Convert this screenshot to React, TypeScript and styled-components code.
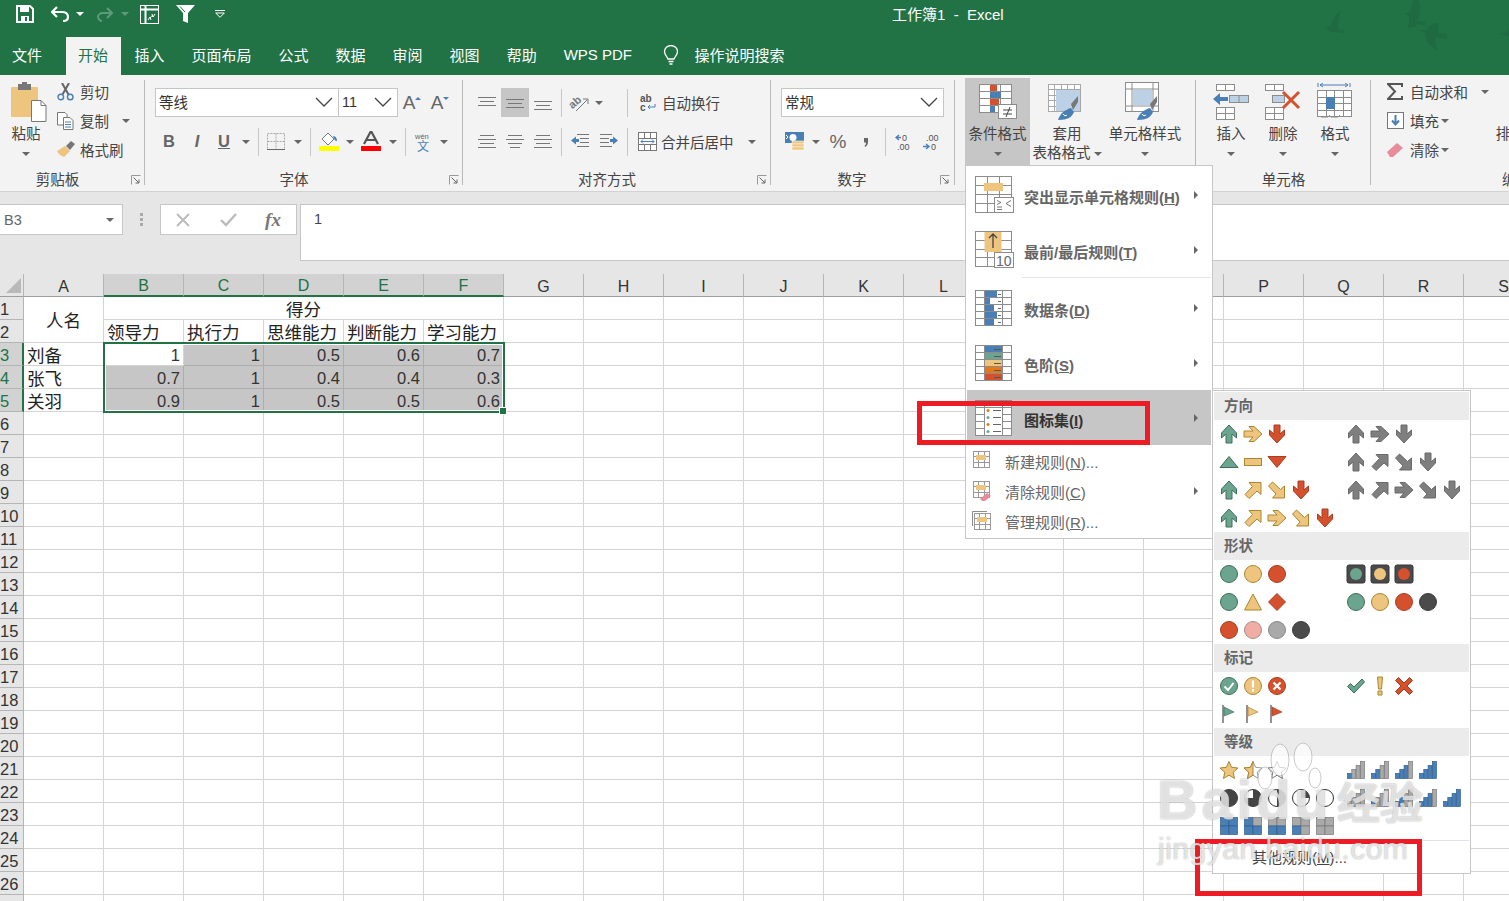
import type { ReactNode } from "react";
import styled, { createGlobalStyle } from "styled-components";

const FONT = `"Liberation Sans", "Noto Sans CJK SC", sans-serif`;
const GREEN = "#217346";
const BLUE = "#4a7fb5";
const ORANGE = "#eec57f";
const RED = "#d5502d";
const LINE = "#8c8c8c";

const GlobalStyle = createGlobalStyle`
  html, body { margin: 0; padding: 0; background: #fff; overflow: hidden; }
  * { box-sizing: border-box; }
`;

const Page = styled.div`
  position: relative;
  width: 1509px;
  height: 901px;
  overflow: hidden;
  font-family: ${FONT};
  color: #444;
`;

const TitleBar = styled.header`
  position: relative;
  height: 75px;
  background: ${GREEN};
  color: #fff;
`;

const QuickRow = styled.div`
  display: flex;
  align-items: center;
  height: 37px;
  padding-bottom: 9px;
`;

const QuickSlot = styled.div<{ $w: number }>`
  display: flex;
  justify-content: center;
  align-items: center;
  flex: 0 0 ${(p) => p.$w}px;
`;

const WindowTitle = styled.div`
  margin-left: 654px;
  padding-bottom: 2px;
  font-size: 15px;
  white-space: nowrap;
`;

const TabRow = styled.nav`
  display: flex;
  align-items: stretch;
  height: 38px;
  font-size: 15px;
`;

const Tab = styled.div<{ $active?: boolean; $first?: boolean }>`
  display: flex;
  align-items: center;
  padding: 0 ${(p) => (p.$active ? 13 : p.$first ? 24 : 13.5)}px 3px ${(p) => (p.$active || p.$first ? 12 : 13.5)}px;
  background: ${(p) => (p.$active ? "#f3f3f3" : "transparent")};
  color: ${(p) => (p.$active ? GREEN : "#fff")};
  white-space: nowrap;
`;

const SearchTab = styled(Tab)`
  margin-left: 18px;
  padding: 0 0 3px;
  gap: 15px;
`;

const Birds = styled.svg`
  position: absolute;
  top: 0;
  right: 0;
`;

const Ribbon = styled.section`
  display: flex;
  height: 117px;
  background: #f3f3f3;
  border-bottom: 1px solid #d2d2d2;
`;

const Group = styled.div<{ $w?: number; $pl?: number; $noLine?: boolean }>`
  position: relative;
  flex: ${(p) => (p.$w ? `0 0 ${p.$w}px` : "1 1 0")};
  min-width: 0;
  overflow: hidden;
  padding-left: ${(p) => p.$pl ?? 0}px;
  display: flex;
  flex-direction: column;
  &::after {
    content: "";
    display: ${(p) => (p.$noLine ? "none" : "block")};
    position: absolute;
    right: 0;
    top: 5px;
    bottom: 6px;
    width: 1px;
    background: #b9b9b9;
  }
`;

const GroupBody = styled.div<{ $column?: boolean }>`
  height: 92px;
  display: flex;
  flex-direction: ${(p) => (p.$column ? "column" : "row")};
  padding-top: ${(p) => (p.$column ? 13 : 3)}px;
`;

const GroupLabel = styled.div<{ $pr?: number; $pl?: number }>`
  height: 24px;
  line-height: 26px;
  margin-left: ${(p) => -(p.$pl ?? 0)}px;
  padding-right: ${(p) => p.$pr ?? 0}px;
  text-align: center;
  font-size: 14.5px;
  color: #444;
  white-space: nowrap;
`;

const EdgeLabel = styled(GroupLabel)`
  text-align: left;
  margin-left: 115px;
`;

const Launcher = styled.svg<{ $right: number }>`
  position: absolute;
  right: ${(p) => p.$right}px;
  bottom: 6px;
`;

const LargeButton = styled.div<{ $w: number; $on?: boolean }>`
  flex: 0 0 ${(p) => p.$w}px;
  width: ${(p) => p.$w}px;
  height: 87px;
  display: flex;
  flex-direction: column;
  align-items: center;
  background: ${(p) => (p.$on ? "#c6c6c6" : "transparent")};
`;

const LargeIcon = styled.div<{ $ml?: number }>`
  height: 47px;
  margin-left: ${(p) => p.$ml ?? 0}px;
  display: flex;
  align-items: center;
  justify-content: center;
`;

const LargeText = styled.div`
  height: 19px;
  line-height: 19px;
  font-size: 14.5px;
  white-space: nowrap;
  display: flex;
  align-items: center;
  gap: 3px;
`;

const CaretLine = styled.div`
  height: 19px;
  display: flex;
  align-items: center;
`;

const Caret = styled.i<{ $ml?: number; $color?: string }>`
  display: inline-block;
  flex: none;
  margin-left: ${(p) => p.$ml ?? 0}px;
  width: 0;
  height: 0;
  border-left: 4px solid transparent;
  border-right: 4px solid transparent;
  border-top: 4px solid ${(p) => p.$color ?? "#666"};
`;

const SmallColumn = styled.div<{ $ml?: number; $w?: number }>`
  flex: none;
  margin-top: -1px;
  margin-left: ${(p) => p.$ml ?? 0}px;
  width: ${(p) => (p.$w ? `${p.$w}px` : "auto")};
  display: flex;
  flex-direction: column;
`;

const SmallRow = styled.div`
  height: 29px;
  display: flex;
  align-items: center;
  font-size: 14.5px;
  white-space: nowrap;
`;

const SmallIcon = styled.span`
  flex: 0 0 23px;
  display: flex;
  align-items: center;
`;

const ToolRow = styled.div<{ $mt?: number }>`
  display: flex;
  align-items: center;
  height: 29px;
  margin-top: ${(p) => p.$mt ?? 0}px;
  font-size: 14.5px;
  white-space: nowrap;
`;

const Tool = styled.div<{ $w: number; $on?: boolean }>`
  flex: 0 0 ${(p) => p.$w}px;
  height: 29px;
  display: flex;
  align-items: center;
  justify-content: center;
  background: ${(p) => (p.$on ? "#c6c6c6" : "transparent")};
`;

const ToolSep = styled.span<{ $ml?: number; $mr?: number }>`
  flex: none;
  width: 1px;
  height: 28px;
  margin: 0 ${(p) => p.$mr ?? 3}px 0 ${(p) => p.$ml ?? 3}px;
  background: #c6c6c6;
`;

const Combo = styled.div<{ $w: number; $ml?: number }>`
  flex: 0 0 ${(p) => p.$w}px;
  height: 29px;
  margin-left: ${(p) => p.$ml ?? 0}px;
  padding: 0 5px 2px 3px;
  display: flex;
  align-items: center;
  justify-content: space-between;
  background: #fff;
  border: 1px solid #c6c6c6;
  font-size: 14.5px;
  color: #333;
`;

const BoldLetter = styled.span<{ $italic?: boolean; $under?: boolean }>`
  font: ${(p) => (p.$italic ? "italic" : "normal")} 700 16.5px "Liberation Sans", sans-serif;
  color: #666;
  text-decoration: ${(p) => (p.$under ? "underline" : "none")};
`;

const SymbolText = styled.span`
  font: 400 19px "Liberation Sans", sans-serif;
  color: #666;
`;

const FormulaBar = styled.section`
  height: 82px;
  padding-top: 12px;
  display: flex;
  align-items: flex-start;
  background: #e6e6e6;
`;

const NameBox = styled.div`
  width: 123px;
  height: 31px;
  padding: 0 8px 0 4px;
  display: flex;
  align-items: center;
  justify-content: space-between;
  background: #fff;
  border: 1px solid #c6c6c6;
  border-left: none;
  font-size: 14.5px;
  color: #666;
`;

const Grip = styled.div`
  width: 37px;
  height: 31px;
  display: flex;
  flex-direction: column;
  align-items: center;
  justify-content: center;
  gap: 2px;
  span {
    width: 3px;
    height: 3px;
    background: #aaa;
  }
`;

const FormulaTools = styled.div`
  width: 137px;
  height: 31px;
  display: flex;
  align-items: center;
  border: 1px solid #c6c6c6;
  background: #fff;
`;

const FormulaTool = styled.div<{ $w: number }>`
  flex: 0 0 ${(p) => p.$w}px;
  display: flex;
  justify-content: center;
  align-items: center;
`;

const FxText = styled.span`
  font: italic 700 19px "Liberation Serif", serif;
  color: #777;
`;

const FormulaInput = styled.div`
  flex: 1;
  margin-left: 3px;
  height: 57px;
  padding: 6px 0 0 13px;
  background: #fff;
  border: 1px solid #c6c6c6;
  border-right: none;
  font-size: 14.5px;
  color: #444;
`;

const Sheet = styled.div`
  display: grid;
  grid-template-columns: 24px repeat(19, 80px);
  grid-template-rows: repeat(28, 23px);
  width: 1544px;
  color: #222;
`;

const CornerCell = styled.div`
  grid-area: 1 / 1;
  background: #e6e6e6;
  border-right: 1px solid #b5b5b5;
  border-bottom: 1px solid #9e9e9e;
  &::after {
    content: "";
    display: block;
    width: 15px;
    height: 15px;
    margin: 4px 0 0 6px;
    background: #b9b9b9;
    clip-path: polygon(100% 0, 100% 100%, 0 100%);
  }
`;

const ColHead = styled.div<{ $col: number; $on: boolean }>`
  grid-area: 1 / ${(p) => p.$col};
  display: flex;
  align-items: flex-end;
  justify-content: center;
  font-size: 16px;
  line-height: 18px;
  background: ${(p) => (p.$on ? "#d2d2d2" : "#e6e6e6")};
  color: ${(p) => (p.$on ? GREEN : "#333")};
  border-right: 1px solid #b5b5b5;
  border-bottom: ${(p) => (p.$on ? `2px solid ${GREEN}` : "1px solid #9e9e9e")};
`;

const RowHead = styled.div<{ $row: number; $on: boolean }>`
  grid-area: ${(p) => p.$row} / 1;
  font-size: 16.5px;
  line-height: 25px;
  overflow: visible;
  white-space: nowrap;
  background: ${(p) => (p.$on ? "#d2d2d2" : "#e6e6e6")};
  color: ${(p) => (p.$on ? GREEN : "#333")};
  border-right: ${(p) => (p.$on ? `2px solid ${GREEN}` : "1px solid #b5b5b5")};
  border-bottom: 1px solid #b5b5b5;
`;

const Cell = styled.div<{
  $row: number;
  $col: number;
  $rows?: number;
  $cols?: number;
  $fill?: boolean;
  $align?: string;
}>`
  grid-row: ${(p) => p.$row} / span ${(p) => p.$rows ?? 1};
  grid-column: ${(p) => p.$col} / span ${(p) => p.$cols ?? 1};
  display: flex;
  align-items: center;
  justify-content: ${(p) => p.$align ?? "flex-start"};
  padding: 0 3px;
  overflow: hidden;
  white-space: nowrap;
  font-size: 17.5px;
  background: ${(p) => (p.$fill ? "#c6c6c6" : "#fff")};
  border-right: 1px solid ${(p) => (p.$fill ? "#adadad" : "#d4d4d4")};
  border-bottom: 1px solid ${(p) => (p.$fill ? "#adadad" : "#d4d4d4")};
`;

const NumberText = styled.span`
  padding-top: 2px;
  font-size: 16.5px;
  color: #333;
`;

const Selection = styled.div`
  grid-row: 4 / span 3;
  grid-column: 3 / span 5;
  position: relative;
  margin: -1px -1px -1px -1px;
  border: 2px solid ${GREEN};
  box-shadow: inset 0 0 0 1px #fff;
  pointer-events: none;
  &::after {
    content: "";
    position: absolute;
    right: -4px;
    bottom: -4px;
    width: 6px;
    height: 6px;
    background: ${GREEN};
    border: 1px solid #fff;
  }
`;

const Menu = styled.div`
  position: absolute;
  left: 965px;
  top: 165px;
  width: 248px;
  height: 374px;
  padding: 1px;
  background: #fff;
  border: 1px solid #c6c6c6;
`;

const MenuBig = styled.div<{ $on?: boolean }>`
  height: 55px;
  display: flex;
  align-items: center;
  padding-left: 8px;
  background: ${(p) => (p.$on ? "#c6c6c6" : "transparent")};
`;

const MenuBigIcon = styled.div`
  flex: 0 0 49px;
  display: flex;
`;

const MenuBigText = styled.div<{ $on?: boolean }>`
  flex: 1;
  padding-top: 4px;
  font-size: 15px;
  font-weight: 700;
  color: ${(p) => (p.$on ? "#333" : "#666")};
  white-space: nowrap;
`;

const MenuRule = styled.div`
  height: 3px;
  margin-left: 55px;
  border-top: 1px solid #e1e3e8;
`;

const MenuSmall = styled.div<{ $mt?: number }>`
  height: 30px;
  margin-top: ${(p) => p.$mt ?? 0}px;
  display: flex;
  align-items: center;
  padding: 0 0 2px 5px;
  font-size: 15px;
  color: #666;
  white-space: nowrap;
`;

const MenuSmallIcon = styled.div`
  flex: 0 0 33px;
  display: flex;
`;

const MenuSmallText = styled.div`
  flex: 1;
`;

const ChevronRight = styled.i`
  flex: none;
  margin-right: 13px;
  width: 0;
  height: 0;
  border-top: 4px solid transparent;
  border-bottom: 4px solid transparent;
  border-left: 4px solid #666;
`;

const SubMenu = styled.div`
  position: absolute;
  left: 1212px;
  top: 390px;
  width: 259px;
  height: 484px;
  padding: 1px;
  background: #fff;
  border: 1px solid #c6c6c6;
`;

const SetHeader = styled.div`
  height: 28px;
  line-height: 29px;
  padding-left: 10px;
  background: #ebebeb;
  font-size: 14.5px;
  font-weight: 700;
  color: #666;
`;

const SetRow = styled.div`
  height: 28px;
  display: flex;
  align-items: center;
  padding-left: 3px;
`;

const SetGroup = styled.div`
  flex: 0 0 127px;
  display: flex;
`;

const SetIconBox = styled.div`
  flex: 0 0 24px;
  display: flex;
  justify-content: center;
`;

const MoreRules = styled.div`
  height: 33px;
  line-height: 33px;
  padding-left: 38px;
  border-top: 1px solid #e1e3e8;
  font-size: 15px;
  color: #444;
`;

const RedFrame = styled.div<{ $x: number; $y: number; $w: number; $h: number }>`
  position: absolute;
  left: ${(p) => p.$x}px;
  top: ${(p) => p.$y}px;
  width: ${(p) => p.$w}px;
  height: ${(p) => p.$h}px;
  border: 5px solid #ed1c24;
`;

const WatermarkBig = styled.div`
  position: absolute;
  left: 1157px;
  top: 767px;
  font: 700 56px "Liberation Sans", sans-serif;
  letter-spacing: 4px;
  color: rgba(255, 255, 255, 0.7);
  text-shadow: 0 0 1.5px rgba(100, 100, 100, 0.65);
  white-space: nowrap;
`;

const WatermarkCn = styled(WatermarkBig)`
  left: 1337px;
  top: 769px;
  letter-spacing: 0;
  font: 700 43px "Noto Sans CJK SC", sans-serif;
`;

const WatermarkUrl = styled(WatermarkBig)`
  left: 1158px;
  top: 832px;
  letter-spacing: 0.5px;
  font: 400 30px "Liberation Sans", sans-serif;
`;

const WatermarkPaw = styled.svg`
  position: absolute;
  left: 1256px;
  top: 742px;
`;

// ---- small drawings ----

const Ico = ({ w, h = w, children }: { w: number; h?: number; children: ReactNode }) => (
  <svg width={w} height={h} viewBox={`0 0 ${w} ${h}`} style={{ display: "block", flex: "none" }}>
    {children}
  </svg>
);

const Table = ({ x = 0, y = 0, w, h, cols, rows, c = LINE }: { x?: number; y?: number; w: number; h: number; cols: number; rows: number; c?: string }) => {
  const parts: ReactNode[] = [];
  for (let i = 1; i < cols; i++) {
    const px = x + Math.round((w * i) / cols) + 0.5;
    parts.push(<path key={`c${i}`} d={`M${px} ${y}V${y + h}`} stroke={c} fill="none" />);
  }
  for (let i = 1; i < rows; i++) {
    const py = y + Math.round((h * i) / rows) + 0.5;
    parts.push(<path key={`r${i}`} d={`M${x} ${py}H${x + w}`} stroke={c} fill="none" />);
  }
  return (
    <g>
      <rect x={x + 0.5} y={y + 0.5} width={w} height={h} fill="#fff" stroke={c} />
      {parts}
    </g>
  );
};

const LauncherIcon = ({ right }: { right: number }) => (
  <Launcher $right={right} width="10" height="10" viewBox="0 0 10 10">
    <path d="M0.5 9.5V0.5H9.5" stroke="#999" fill="none" />
    <path d="M2.5 2.5L8 8M8 4.5V8H4.5" stroke="#666" fill="none" />
  </Launcher>
);

const Chevron = () => (
  <Ico w={18} h={10}>
    <path d="M1 1L9 9L17 1" stroke="#444" fill="none" strokeWidth="1.3" />
  </Ico>
);

const Bird = ({ d, dx }: { d: string; dx: number }) => <path d={d} transform={`translate(${dx} 0)`} fill="#1f6a41" />;

const CondIcon = () => (
  <Ico w={38} h={36}>
    <Table w={32} h={28} cols={3} rows={4} />
    <rect x="11" y="1" width="7" height="6" fill={RED} />
    <rect x="11" y="8" width="11" height="6" fill={BLUE} />
    <rect x="11" y="15" width="9" height="6" fill={RED} />
    <rect x="11" y="22" width="5" height="6" fill={BLUE} />
    <rect x="19.5" y="20.5" width="18" height="14" fill="#fff" stroke={LINE} />
    <path d="M24 26h9M24 30h9M31 23l-4 10" stroke="#444" fill="none" />
  </Ico>
);

const Brush = ({ x, y }: { x: number; y: number }) => (
  <g transform={`translate(${x} ${y})`}>
    <path d="M13 0l7 -8v6l-5 8z" fill="#777" />
    <path d="M0 16c2-6 6-10 13-12l3 4c-2 5-6 8-16 8z" fill={BLUE} />
    <path d="M5 10c1 2 3 2 4 1" stroke="#fff" fill="none" />
  </g>
);

const TableFormatIcon = () => (
  <Ico w={38} h={38}>
    <Table y={1} w={32} h={27} cols={5} rows={5} c="#a8a8a8" />
    <rect x="8" y="7" width="24" height="21" fill="#bcd0e6" />
    <Brush x={10} y={21} />
  </Ico>
);

const CellStyleIcon = () => (
  <Ico w={40} h={40}>
    <Table w={33} h={29} cols={1} rows={1} />
    <path d="M7 0V30M28 0V30M0 7H33M0 24H33" stroke={LINE} />
    <rect x="8" y="8" width="19" height="15" fill="#bcd0e6" />
    <Brush x={12} y={22} />
  </Ico>
);

const InsertIcon = () => (
  <Ico w={37} h={36}>
    <Table x={3} w={18} h={6} cols={2} rows={1} />
    <Table x={3} y={23} w={18} h={12} cols={2} rows={2} />
    <rect x="16.5" y="11.5" width="19" height="7" fill="#bcd0e6" stroke={LINE} />
    <path d="M26 11V18" stroke={LINE} />
    <path d="M0 15L7 9V13H15V17H7V21Z" fill={BLUE} />
  </Ico>
);

const DeleteIcon = () => (
  <Ico w={36} h={36}>
    <Table w={18} h={6} cols={2} rows={1} />
    <Table y={23} w={18} h={12} cols={2} rows={2} />
    <rect x="7.5" y="11.5" width="12" height="7" fill="#bcd0e6" stroke={LINE} />
    <path d="M18 8L34 24M34 8L18 24" stroke={RED} strokeWidth="3" />
  </Ico>
);

const FormatIcon = () => (
  <Ico w={36} h={38}>
    <path d="M1 0V4M33 0V4M3 2H31M3 2l3-2M3 2l3 2M31 2l-3-2M31 2l-3 2" stroke={BLUE} fill="none" />
    <Table x={0} y={7} w={34} h={26} cols={4} rows={4} />
    <rect x="9" y="14" width="9" height="12" fill={BLUE} />
    <path d="M4 34h7l2-2M14 34h7l2-2" stroke="#888" fill="none" />
  </Ico>
);

const PasteIcon = () => (
  <Ico w={36} h={40}>
    <rect x="0" y="5" width="27" height="30" rx="1" fill={ORANGE} />
    <rect x="7" y="2" width="13" height="6" fill="#777" />
    <rect x="11" y="0" width="5" height="3" fill="#777" />
    <path d="M20.5 18.5H30l5 5V39.5H20.5Z" fill="#fff" stroke="#777" />
    <path d="M30 18.5v5h5" fill="none" stroke="#777" />
  </Ico>
);

const ScissorsIcon = () => (
  <Ico w={17} h={18}>
    <path d="M5.5 11.5L12 0M11.5 11.5L5 0" stroke="#666" strokeWidth="2" />
    <circle cx="3.8" cy="14" r="2.8" fill="#f3f3f3" stroke={BLUE} strokeWidth="1.4" />
    <circle cx="13.2" cy="14" r="2.8" fill="#f3f3f3" stroke={BLUE} strokeWidth="1.4" />
  </Ico>
);

const CopyIcon = () => (
  <Ico w={17} h={18}>
    <path d="M0.5 0.5H8l2 2V13H0.5Z" fill="#fff" stroke="#777" />
    <path d="M6.5 5.5H13l3 3V17.5H6.5Z" fill="#fff" stroke="#777" />
    <path d="M8 10h6M8 12.5h6M8 15h6" stroke={BLUE} />
  </Ico>
);

const PainterIcon = () => (
  <Ico w={18} h={17}>
    <path d="M0 10L8 5L13 10L7 16C4 15 1 13 0 10Z" fill={ORANGE} />
    <path d="M9 5L14 0L18 3L13 9Z" fill="#777" />
  </Ico>
);

const HLines = ({ x = 0, ys, widths }: { x?: number; ys: number[]; widths: number[] }) => (
  <>
    {ys.map((y, i) => (
      <path key={y} d={`M${x + (18 - widths[i]) / 2} ${y + 0.5}h${widths[i]}`} stroke="#777" />
    ))}
  </>
);

const AlignV = ({ y }: { y: number }) => (
  <Ico w={18} h={14}>
    <HLines ys={[y, y + 4, y + 8]} widths={[18, 14, 18]} />
  </Ico>
);

const AlignH = ({ w }: { w: number[] }) => (
  <Ico w={18} h={13}>
    <HLines ys={[0, 4, 8, 12]} widths={w} />
  </Ico>
);

const IndentIcon = ({ flip }: { flip?: boolean }) => (
  <Ico w={18} h={15}>
    <g transform={flip ? "translate(18 0) scale(-1 1)" : undefined}>
      <path d="M6 .5h12M9 4.5h9M9 8.5h9M6 12.5h12" stroke="#777" />
      <path d="M0 6.5L5 2.5V5H8V8H5V10.5Z" fill={BLUE} />
    </g>
  </Ico>
);

const WrapIcon = () => (
  <Ico w={16} h={18}>
    <text x="0" y="8" fontFamily="Liberation Sans" fontSize="10" fontWeight="700" fill="#555">ab</text>
    <text x="0" y="17" fontFamily="Liberation Sans" fontSize="10" fontWeight="700" fill="#555">c</text>
    <path d="M15 10v3H8M10 11l-2 2 2 2" stroke={BLUE} fill="none" />
  </Ico>
);

const MergeIcon = () => (
  <Ico w={19} h={19}>
    <Table w={18} h={18} cols={3} rows={3} c="#777" />
    <rect x="1" y="7" width="17" height="5" fill="#fff" />
    <path d="M3 9.5H16M5 7.5L3 9.5L5 11.5M14 7.5L16 9.5L14 11.5" stroke={BLUE} fill="none" />
  </Ico>
);

const OrientIcon = () => (
  <Ico w={22} h={20}>
    <text x="1" y="13" transform="rotate(-40 7 10)" fontFamily="Liberation Sans" fontSize="11" fontWeight="700" fill="#777">ab</text>
    <path d="M8 18L19 7M15 6h5v5" stroke="#777" fill="none" />
  </Ico>
);

const CurrencyIcon = () => (
  <Ico w={20} h={19}>
    <rect x="0" y="0" width="19" height="11" fill={BLUE} />
    <circle cx="8" cy="5.5" r="3.5" fill="#fff" />
    <path d="M1 3l2 2-2 2" stroke="#fff" fill="none" />
    <rect x="7" y="9" width="12" height="3" fill={ORANGE} stroke="#fff" strokeWidth=".5" />
    <rect x="7" y="12" width="12" height="3" fill={ORANGE} stroke="#fff" strokeWidth=".5" />
    <rect x="7" y="15" width="12" height="3" fill={ORANGE} stroke="#fff" strokeWidth=".5" />
  </Ico>
);

const CommaIcon = () => (
  <Ico w={6} h={10}>
    <path d="M1 1H5V5C5 7 4 9 2 10L1.5 9C2.5 8 3 7 3 5.5H1Z" fill="#666" />
  </Ico>
);

const DecimalIcon = ({ more }: { more?: boolean }) => (
  <Ico w={17} h={18}>
    <text x={more ? 3 : 7} y="8" fontFamily="Liberation Sans" fontSize="9" fill="#555">{more ? ".00" : "0"}</text>
    <text x={more ? 8 : 2} y="17" fontFamily="Liberation Sans" fontSize="9" fill="#555">{more ? "0" : ".00"}</text>
    {more ? (
      <path d="M0 13.5H5M3 11l3 2.5L3 16" stroke={BLUE} fill="none" strokeWidth="1.4" />
    ) : (
      <path d="M1 4.5H6M4 2L1 4.5L4 7" stroke={BLUE} fill="none" strokeWidth="1.4" />
    )}
  </Ico>
);

const SmallTable = ({ eraser, frame }: { eraser?: boolean; frame?: boolean }) => (
  <Ico w={20} h={20}>
    {frame && <path d="M0.5 15V0.5H15" stroke={LINE} fill="none" />}
    <Table x={frame ? 2 : 1} y={frame ? 2 : 0} w={16} h={16} cols={3} rows={3} c="#999" />
    <rect x={frame ? 5 : 4} y={frame ? 6 : 4} width="10" height="5" fill={ORANGE} />
    {eraser && <path d="M8 18l7-6 4 3-6 5h-3z" fill="#e88c9b" />}
  </Ico>
);

const RuleBarsIcon = () => (
  <Ico w={38} h={36}>
    <Table w={36} h={35} cols={1} rows={5} />
    <path d="M9.5 0V35M27.5 0V35" stroke={LINE} />
    {[12, 5, 9, 12, 9].map((w, i) => (
      <rect key={i} x="10" y={1 + i * 7} width={w} height="6" fill={BLUE} />
    ))}
    {[0, 1, 2, 3, 4].map((i) => (
      <path key={i} d={`M23 ${4.5 + i * 7}h3`} stroke="#666" />
    ))}
  </Ico>
);

const ScaleIcon = () => (
  <Ico w={38} h={36}>
    <Table w={36} h={35} cols={1} rows={5} />
    <path d="M9.5 0V35M27.5 0V35" stroke={LINE} />
    {[BLUE, "#6ba58f", ORANGE, "#e67817", RED].map((c, i) => (
      <g key={c}>
        <rect x="10" y={1 + i * 7} width="17" height="6" fill={c} />
        <path d={`M19 ${4.5 + i * 7}h7`} stroke="#555" />
      </g>
    ))}
  </Ico>
);

const IconSetIcon = () => (
  <Ico w={38} h={36}>
    <Table w={36} h={35} cols={1} rows={5} />
    <path d="M9.5 0V35M27.5 0V35" stroke={LINE} />
    <rect x="10" y="8" width="17" height="27" fill="#fff" />
    {[1, 2, 3, 4].map((i) => (
      <g key={i}>
        <circle cx="13" cy={3.5 + i * 7} r="1.5" fill={i % 2 ? "#e67817" : "#6ba58f"} />
        <path d={`M18 ${3.5 + i * 7}h8`} stroke="#666" />
      </g>
    ))}
  </Ico>
);

const HighlightIcon = () => (
  <Ico w={40} h={38}>
    <Table w={36} h={36} cols={3} rows={4} />
    <rect x="9" y="7" width="19" height="8" fill={ORANGE} />
    <rect x="19.5" y="21.5" width="19" height="15" fill="#fff" stroke={LINE} />
    <path d="M22 24.5l4 2-4 2M22 31h5M22 33.5h5M36 24.5l-5 3 5 3" stroke="#666" fill="none" strokeWidth=".9" />
  </Ico>
);

const TopTenIcon = () => (
  <Ico w={40} h={37}>
    <Table w={36} h={35} cols={3} rows={4} />
    <rect x="9.5" y="1" width="17" height="20" fill={ORANGE} />
    <path d="M18 17V3M14 7l4-4 4 4" stroke="#444" fill="none" strokeWidth="1.3" />
    <rect x="19.5" y="21.5" width="19" height="15" fill="#fff" stroke={LINE} />
    <text x="21" y="35" fontFamily="Liberation Sans" fontSize="14" fill="#666">10</text>
  </Ico>
);

// ---- icon set glyphs ----

const TONES: Record<string, [string, string]> = {
  g: ["#6ba58f", "#3f6f5c"],
  y: ["#eec57f", "#ab8530"],
  r: ["#d5502d", "#a83f22"],
  k: ["#7f7f7f", "#6a6a6a"],
  p: ["#f0ada3", "#ac8a85"],
  s: ["#a9a9a9", "#888"],
  d: ["#4b4b4b", "#3c3c3c"],
};

const UP = "M10 1L17.5 9V14L13 10V19H7V10L2.5 14V9Z";
const NE = "M6 2.5H18V14.5L14 11L6 18.5L2 14.5L9.5 6.5Z";
const ROT: Record<string, [string, number]> = {
  up: [UP, 0],
  e: [UP, 90],
  dn: [UP, 180],
  ne: [NE, 0],
  se: [NE, 90],
};

const BarsGlyph = ({ n }: { n: number }) => (
  <>
    {[0, 1, 2, 3].map((i) => (
      <rect
        key={i}
        x={1.5 + i * 4.3}
        y={13.5 - i * 4}
        width="4"
        height={5 + i * 4}
        fill={i < n ? BLUE : "#aaa"}
        stroke={i < n ? "#2f5f90" : "#777"}
        strokeWidth=".7"
      />
    ))}
  </>
);

const BoxesGlyph = ({ n }: { n: number }) => {
  const blue = [
    [0, 1, 2, 3],
    [0, 2, 3],
    [2, 3],
    [2],
    [],
  ][4 - n];
  return (
    <>
      {[0, 1, 2, 3].map((i) => (
        <rect
          key={i}
          x={1.5 + (i % 2) * 8.5}
          y={1.5 + (i > 1 ? 8.5 : 0)}
          width="8.5"
          height="8.5"
          fill={blue.includes(i) ? BLUE : "#aaa"}
          stroke={blue.includes(i) ? "#2f5f90" : "#777"}
          strokeWidth=".7"
        />
      ))}
    </>
  );
};

const BallGlyph = ({ n }: { n: number }) => {
  const pie = [
    "",
    "M10 10V1.5A8.5 8.5 0 0 1 18.5 10Z",
    "M10 1.5A8.5 8.5 0 0 1 10 18.5Z",
    "M10 10V1.5A8.5 8.5 0 1 1 1.5 10Z",
    "M10 1.5A8.5 8.5 0 1 1 9.99 1.5Z",
  ][n];
  return (
    <>
      <circle cx="10" cy="10" r="8.5" fill="#fff" stroke="#333" />
      <path d={pie} fill="#444" />
    </>
  );
};

const STAR = "M10 1.5L12.6 7.3L19 8L14.2 12.2L15.5 18.5L10 15.2L4.5 18.5L5.8 12.2L1 8L7.4 7.3Z";

const SetIcon = ({ name }: { name: string }) => {
  const [kind, tone = "g"] = name.split(".");
  const [fill, stroke] = TONES[tone] ?? TONES.g;
  let body: ReactNode = null;
  if (ROT[kind]) {
    body = <path d={ROT[kind][0]} transform={`rotate(${ROT[kind][1]} 10 10)`} fill={fill} stroke={stroke} />;
  } else if (kind === "tri") {
    body = <path d="M10 4.5L19 15.5H1Z" fill={fill} stroke={stroke} />;
  } else if (kind === "flat") {
    body = <rect x="1.5" y="6.5" width="17" height="7" fill={fill} stroke={stroke} />;
  } else if (kind === "tdn") {
    body = <path d="M1 4.5H19L10 15.5Z" fill={fill} stroke={stroke} />;
  } else if (kind === "dot") {
    body = <circle cx="10" cy="10" r="8.5" fill={fill} stroke={stroke} />;
  } else if (kind === "lamp") {
    body = (
      <>
        <rect x="1" y="1" width="18" height="18" rx="2" fill="#4b4b4b" stroke="#333" />
        <circle cx="10" cy="10" r="6" fill={fill} />
      </>
    );
  } else if (kind === "peak") {
    body = <path d="M10 2L18.5 18H1.5Z" fill={fill} stroke={stroke} strokeLinejoin="round" />;
  } else if (kind === "dia") {
    body = <path d="M10 1.5L18.5 10L10 18.5L1.5 10Z" fill={fill} stroke={stroke} strokeLinejoin="round" />;
  } else if (kind === "okc") {
    body = (
      <>
        <circle cx="10" cy="10" r="8.5" fill={fill} stroke={stroke} />
        <path d="M5.5 10.5L9 14L14.5 7" stroke="#fff" strokeWidth="2" fill="none" />
      </>
    );
  } else if (kind === "warn") {
    body = (
      <>
        <circle cx="10" cy="10" r="8.5" fill={fill} stroke={stroke} />
        <path d="M10 4.5V11.5M10 13V15.5" stroke="#fff" strokeWidth="2.2" fill="none" />
      </>
    );
  } else if (kind === "noc") {
    body = (
      <>
        <circle cx="10" cy="10" r="8.5" fill={fill} stroke={stroke} />
        <path d="M6.5 6.5L13.5 13.5M13.5 6.5L6.5 13.5" stroke="#fff" strokeWidth="2.2" fill="none" />
      </>
    );
  } else if (kind === "tick") {
    body = <path d="M1.5 10.5L4.5 7.5L8 11L16 3L18.5 6L8 17Z" fill={fill} stroke={stroke} />;
  } else if (kind === "excl") {
    body = <path d="M7.5 1H12.5L11.5 13H8.5ZM8 15H12V19H8Z" fill={fill} stroke={stroke} />;
  } else if (kind === "cross") {
    body = <path d="M1.5 4.5L4.5 1.5L10 7L15.5 1.5L18.5 4.5L13 10L18.5 15.5L15.5 18.5L10 13L4.5 18.5L1.5 15.5L7 10Z" fill={fill} stroke={stroke} />;
  } else if (kind === "flag") {
    body = (
      <>
        <path d="M4 1V19" stroke="#777" strokeWidth="1.6" />
        <path d="M5 3L15 8L5 12Z" fill={fill} stroke={stroke} strokeWidth=".7" />
      </>
    );
  } else if (kind === "star") {
    body = <path d={STAR} fill={fill} stroke={stroke} />;
  } else if (kind === "half") {
    body = (
      <>
        <path d={STAR} fill="#fff" stroke="#999" />
        <path d="M10 1.5L7.4 7.3L1 8L5.8 12.2L4.5 18.5L10 15.2Z" fill={fill} stroke={stroke} />
      </>
    );
  } else if (kind === "empty") {
    body = <path d={STAR} fill="#fff" stroke="#777" />;
  } else if (kind === "bars") {
    body = <BarsGlyph n={Number(tone)} />;
  } else if (kind === "boxes") {
    body = <BoxesGlyph n={Number(tone)} />;
  } else if (kind === "ball") {
    body = <BallGlyph n={Number(tone)} />;
  }
  return (
    <SetIconBox>
      <svg width="20" height="20" viewBox="0 0 20 20">{body}</svg>
    </SetIconBox>
  );
};

type SetSection = { title: string; rows: [string[], string[]][] };

const SECTIONS: SetSection[] = [
  {
    title: "方向",
    rows: [
      [["up.g", "e.y", "dn.r"], ["up.k", "e.k", "dn.k"]],
      [["tri.g", "flat.y", "tdn.r"], ["up.k", "ne.k", "se.k", "dn.k"]],
      [["up.g", "ne.y", "se.y", "dn.r"], ["up.k", "ne.k", "e.k", "se.k", "dn.k"]],
      [["up.g", "ne.y", "e.y", "se.y", "dn.r"], []],
    ],
  },
  {
    title: "形状",
    rows: [
      [["dot.g", "dot.y", "dot.r"], ["lamp.g", "lamp.y", "lamp.r"]],
      [["dot.g", "peak.y", "dia.r"], ["dot.g", "dot.y", "dot.r", "dot.d"]],
      [["dot.r", "dot.p", "dot.s", "dot.d"], []],
    ],
  },
  {
    title: "标记",
    rows: [
      [["okc.g", "warn.y", "noc.r"], ["tick.g", "excl.y", "cross.r"]],
      [["flag.g", "flag.y", "flag.r"], []],
    ],
  },
  {
    title: "等级",
    rows: [
      [["star.y", "half.y", "empty"], ["bars.1", "bars.2", "bars.3", "bars.4"]],
      [["ball.4", "ball.3", "ball.2", "ball.1", "ball.0"], ["bars.0", "bars.1", "bars.2", "bars.3", "bars.4"]],
      [["boxes.4", "boxes.3", "boxes.2", "boxes.1", "boxes.0"], []],
    ],
  },
];

const COLUMNS = "ABCDEFGHIJKLMNOPQRS".split("");
const ROW_COUNT = 27;

const SCORES: Record<number, [string, string[]]> = {
  3: ["刘备", ["1", "1", "0.5", "0.6", "0.7"]],
  4: ["张飞", ["0.7", "1", "0.4", "0.4", "0.3"]],
  5: ["关羽", ["0.9", "1", "0.5", "0.5", "0.6"]],
};
const SKILLS = ["领导力", "执行力", "思维能力", "判断能力", "学习能力"];

const SheetCells = () => {
  const cells: ReactNode[] = [];
  for (let r = 1; r <= ROW_COUNT; r++) {
    const gridRow = r + 1;
    cells.push(
      <RowHead key={`h${r}`} $row={gridRow} $on={r >= 3 && r <= 5}>
        {r}
      </RowHead>
    );
    for (let c = 0; c < COLUMNS.length; c++) {
      const gridCol = c + 2;
      const key = `${r}-${c}`;
      if (r === 1 && c === 0) {
        cells.push(<Cell key={key} $row={gridRow} $col={gridCol} $rows={2} $align="center">人名</Cell>);
      } else if (r === 2 && c === 0) {
        continue;
      } else if (r === 1 && c === 1) {
        cells.push(<Cell key={key} $row={gridRow} $col={gridCol} $cols={5} $align="center">得分</Cell>);
      } else if (r === 1 && c > 1 && c < 6) {
        continue;
      } else if (r === 2 && c >= 1 && c <= 5) {
        cells.push(<Cell key={key} $row={gridRow} $col={gridCol}>{SKILLS[c - 1]}</Cell>);
      } else if (SCORES[r] && c === 0) {
        cells.push(<Cell key={key} $row={gridRow} $col={gridCol}>{SCORES[r][0]}</Cell>);
      } else if (SCORES[r] && c >= 1 && c <= 5) {
        cells.push(
          <Cell key={key} $row={gridRow} $col={gridCol} $align="flex-end" $fill={!(r === 3 && c === 1)}>
            <NumberText>{SCORES[r][1][c - 1]}</NumberText>
          </Cell>
        );
      } else {
        cells.push(<Cell key={key} $row={gridRow} $col={gridCol} />);
      }
    }
  }
  return <>{cells}</>;
};

export default function App() {
  return (
    <Page>
      <GlobalStyle />
      <TitleBar>
        <Birds width="240" height="75" viewBox="0 0 240 75">
          <Bird dx={7} d="M65 11c-6 4-9 9-10 15l-5 1 5 5 5 0 8 1 0-3-6-1c0-7 1-12 3-18z" />
          <Bird dx={10} d="M139 0c3 7 3 15-1 21l8 1 0 3-8-1c-2 4-6 4-10 3 2-4 3-7 2-11l-5-2 6-2c1-4 2-8 3-12z" />
          <Bird dx={-2} d="M172 23c-6 0-10 2-12 7l-7 0 6 4c-1 6 4 13 12 16-3-5-3-9-2-13l11 2 0-5-9-1c0-4 0-7 1-10z" />
          <Bird dx={8} d="M229 33l-6 0 6 3 11 0 0-6-8-1z" />
        </Birds>
        <QuickRow>
          <QuickSlot $w={50}>
            <Ico w={18} h={18}>
              <path d="M1 1H14L17 4V17H1Z" fill="none" stroke="#fff" strokeWidth="2" />
              <rect x="4" y="1" width="9" height="6" fill="#fff" />
              <rect x="5" y="11" width="8" height="6" fill="#fff" />
              <rect x="9" y="12" width="2" height="4" fill={GREEN} />
            </Ico>
          </QuickSlot>
          <QuickSlot $w={20}>
            <Ico w={18} h={16}>
              <path d="M6 1L1 6L6 11M1 6H11C15 6 17 8 17 11S15 15 12 15" stroke="#fff" strokeWidth="2.2" fill="none" />
            </Ico>
          </QuickSlot>
          <QuickSlot $w={19}>
            <Caret $color="#fff" />
          </QuickSlot>
          <QuickSlot $w={31}>
            <Ico w={16} h={15}>
              <path d="M10 1L15 6L10 11M15 6H6C3 6 1 8 1 10S3 14 5 14" stroke="#5d9a79" strokeWidth="2" fill="none" />
            </Ico>
          </QuickSlot>
          <QuickSlot $w={10}>
            <Caret $color="#5d9a79" />
          </QuickSlot>
          <QuickSlot $w={38}>
            <Ico w={19} h={19}>
              <rect x="0.5" y="0.5" width="18" height="18" fill="none" stroke="#fff" />
              <path d="M1 4.5H18M5.5 1V18" stroke="#fff" strokeWidth="2" />
              <path d="M8 15l2-3 1 3M15 9l-2 3-1-3M10 13c1-2 2-2 3-2" stroke="#fff" fill="none" />
            </Ico>
          </QuickSlot>
          <QuickSlot $w={34}>
            <Ico w={19} h={18}>
              <path d="M0 0H19L12 8V18L7 16V8Z" fill="#fff" />
              <path d="M4 1.5L9 7" stroke={GREEN} />
            </Ico>
          </QuickSlot>
          <QuickSlot $w={36}>
            <Ico w={10} h={8}>
              <path d="M0 .5H10M.7 3L5 7.3L9.3 3Z" stroke="#fff" fill="none" />
            </Ico>
          </QuickSlot>
          <WindowTitle>工作簿1&nbsp; -&nbsp; Excel</WindowTitle>
        </QuickRow>
        <TabRow>
          <Tab $first>文件</Tab>
          <Tab $active>开始</Tab>
          <Tab>插入</Tab>
          <Tab>页面布局</Tab>
          <Tab>公式</Tab>
          <Tab>数据</Tab>
          <Tab>审阅</Tab>
          <Tab>视图</Tab>
          <Tab>帮助</Tab>
          <Tab>WPS PDF</Tab>
          <SearchTab>
            <Ico w={16} h={20}>
              <path d="M5 14C4 11 1.5 10 1.5 6.5A6.5 6 0 0 1 14.5 6.5C14.5 10 12 11 11 14ZM5.5 16.5H10.5M6.5 19H9.5" stroke="#fff" fill="none" strokeWidth="1.3" />
            </Ico>
            操作说明搜索
          </SearchTab>
        </TabRow>
      </TitleBar>

      <Ribbon>
        <Group $w={145}>
          <GroupBody>
            <LargeButton $w={52}>
              <LargeIcon $ml={6}>
                <PasteIcon />
              </LargeIcon>
              <LargeText>粘贴</LargeText>
              <CaretLine>
                <Caret />
              </CaretLine>
            </LargeButton>
            <SmallColumn $ml={5}>
              <SmallRow>
                <SmallIcon><ScissorsIcon /></SmallIcon>剪切
              </SmallRow>
              <SmallRow>
                <SmallIcon><CopyIcon /></SmallIcon>复制
                <Caret $ml={13} />
              </SmallRow>
              <SmallRow>
                <SmallIcon><PainterIcon /></SmallIcon>格式刷
              </SmallRow>
            </SmallColumn>
          </GroupBody>
          <GroupLabel $pr={30}>剪贴板</GroupLabel>
          <LauncherIcon right={4} />
        </Group>

        <Group $w={318} $pl={10}>
          <GroupBody $column>
            <ToolRow>
              <Combo $w={184}>
                等线
                <Chevron />
              </Combo>
              <Combo $w={60} $ml={-1}>
                11
                <Chevron />
              </Combo>
              <Tool $w={28}>
                <SymbolText>A</SymbolText>
                <Ico w={6} h={14}><path d="M0 4L3 1L6 4Z" fill={BLUE} /></Ico>
              </Tool>
              <Tool $w={28}>
                <SymbolText>A</SymbolText>
                <Ico w={6} h={14}><path d="M0 1L3 4L6 1Z" fill={BLUE} /></Ico>
              </Tool>
            </ToolRow>
            <ToolRow $mt={10}>
              <Tool $w={28}><BoldLetter>B</BoldLetter></Tool>
              <Tool $w={28}><BoldLetter $italic>I</BoldLetter></Tool>
              <Tool $w={26}><BoldLetter $under>U</BoldLetter></Tool>
              <Tool $w={18}><Caret /></Tool>
              <ToolSep />
              <Tool $w={27}>
                <Ico w={18} h={17}>
                  <path d="M.5 .5H17.5V16.5H.5ZM9 .5V16.5M.5 8.5H17.5" stroke="#aaa" strokeDasharray="2 1" fill="none" />
                  <path d="M0 16.5H18" stroke="#666" />
                </Ico>
              </Tool>
              <Tool $w={18}><Caret /></Tool>
              <ToolSep />
              <Tool $w={30}>
                <Ico w={20} h={21}>
                  <path d="M3 8L9 2L15 8L9 14Z" fill="#fff" stroke="#777" />
                  <path d="M14 5C17 5 18 8 18 10C16 10 15 8 14 5Z" fill={BLUE} />
                  <rect y="15" width="20" height="5" fill="#ffff00" />
                </Ico>
              </Tool>
              <Tool $w={12}><Caret /></Tool>
              <Tool $w={30}>
                <Ico w={20} h={21}>
                  <path d="M3 13L10 0L17 13M5.5 9H14.5" stroke="#555" strokeWidth="2.2" fill="none" />
                  <rect y="15" width="20" height="5" fill="#ff0000" />
                </Ico>
              </Tool>
              <Tool $w={14}><Caret /></Tool>
              <ToolSep $ml={5} $mr={2} />
              <Tool $w={29}>
                <Ico w={18} h={20}>
                  <text x="1" y="7" fontFamily="Liberation Sans" fontSize="7.5" fill="#666">wén</text>
                  <text x="3" y="19" fontFamily="Noto Sans CJK SC" fontSize="12" fill={BLUE}>文</text>
                </Ico>
              </Tool>
              <Tool $w={14}><Caret /></Tool>
            </ToolRow>
          </GroupBody>
          <GroupLabel $pl={10} $pr={20}>字体</GroupLabel>
          <LauncherIcon right={4} />
        </Group>

        <Group $w={308} $pl={10}>
          <GroupBody $column>
            <ToolRow>
              <Tool $w={28}><AlignV y={1} /></Tool>
              <Tool $w={28} $on><AlignV y={3} /></Tool>
              <Tool $w={28}><AlignV y={5} /></Tool>
              <ToolSep $ml={4} />
              <Tool $w={27}><OrientIcon /></Tool>
              <Tool $w={13}><Caret /></Tool>
              <ToolSep $ml={22} $mr={5} />
              <Tool $w={29}><WrapIcon /></Tool>
              自动换行
            </ToolRow>
            <ToolRow $mt={10}>
              <Tool $w={28}><AlignH w={[14, 18, 14, 18]} /></Tool>
              <Tool $w={28}><AlignH w={[14, 18, 14, 10]} /></Tool>
              <Tool $w={28}><AlignH w={[14, 18, 14, 18]} /></Tool>
              <ToolSep $ml={4} />
              <Tool $w={30}><IndentIcon /></Tool>
              <Tool $w={28}><IndentIcon flip /></Tool>
              <ToolSep $ml={4} $mr={5} />
              <Tool $w={28}><MergeIcon /></Tool>
              合并后居中
              <Caret $ml={14} />
            </ToolRow>
          </GroupBody>
          <GroupLabel $pl={10} $pr={20}>对齐方式</GroupLabel>
          <LauncherIcon right={4} />
        </Group>

        <Group $w={184} $pl={10}>
          <GroupBody $column>
            <ToolRow>
              <Combo $w={163}>
                常规
                <Chevron />
              </Combo>
            </ToolRow>
            <ToolRow $mt={10}>
              <Tool $w={27}><CurrencyIcon /></Tool>
              <Tool $w={16}><Caret /></Tool>
              <Tool $w={28}><SymbolText>%</SymbolText></Tool>
              <Tool $w={28}><CommaIcon /></Tool>
              <ToolSep $ml={5} />
              <Tool $w={28}><DecimalIcon /></Tool>
              <Tool $w={28}><DecimalIcon more /></Tool>
            </ToolRow>
          </GroupBody>
          <GroupLabel $pl={10} $pr={22}>数字</GroupLabel>
          <LauncherIcon right={5} />
        </Group>

        <Group $w={241} $pl={10}>
          <GroupBody>
            <LargeButton $w={65} $on>
              <LargeIcon><CondIcon /></LargeIcon>
              <LargeText>条件格式</LargeText>
              <CaretLine><Caret /></CaretLine>
            </LargeButton>
            <LargeButton $w={74}>
              <LargeIcon><TableFormatIcon /></LargeIcon>
              <LargeText>套用</LargeText>
              <LargeText>表格格式<Caret /></LargeText>
            </LargeButton>
            <LargeButton $w={82}>
              <LargeIcon><CellStyleIcon /></LargeIcon>
              <LargeText>单元格样式</LargeText>
              <CaretLine><Caret /></CaretLine>
            </LargeButton>
          </GroupBody>
          <GroupLabel />
        </Group>

        <Group $w={175} $pl={9}>
          <GroupBody>
            <LargeButton $w={52}>
              <LargeIcon><InsertIcon /></LargeIcon>
              <LargeText>插入</LargeText>
              <CaretLine><Caret /></CaretLine>
            </LargeButton>
            <LargeButton $w={52}>
              <LargeIcon><DeleteIcon /></LargeIcon>
              <LargeText>删除</LargeText>
              <CaretLine><Caret /></CaretLine>
            </LargeButton>
            <LargeButton $w={52}>
              <LargeIcon><FormatIcon /></LargeIcon>
              <LargeText>格式</LargeText>
              <CaretLine><Caret /></CaretLine>
            </LargeButton>
          </GroupBody>
          <GroupLabel $pl={9}>单元格</GroupLabel>
        </Group>

        <Group $noLine $pl={16}>
          <GroupBody>
            <SmallColumn $w={109}>
              <SmallRow>
                <SmallIcon>
                  <Ico w={16} h={17}>
                    <path d="M15 4V1H1L8 8.5L1 16H15V13" stroke="#555" strokeWidth="2" fill="none" />
                  </Ico>
                </SmallIcon>
                自动求和
                <Caret $ml={13} />
              </SmallRow>
              <SmallRow>
                <SmallIcon>
                  <Ico w={17} h={17}>
                    <rect x=".5" y=".5" width="16" height="16" fill="#fff" stroke="#777" />
                    <path d="M8.5 3V12M5 8.5L8.5 12.5L12 8.5" stroke={BLUE} strokeWidth="2" fill="none" />
                  </Ico>
                </SmallIcon>
                填充
                <Caret $ml={2} />
              </SmallRow>
              <SmallRow>
                <SmallIcon>
                  <Ico w={16} h={14}>
                    <path d="M0 9L10 0L16 5L6 14H3Z" fill="#e88c9b" />
                  </Ico>
                </SmallIcon>
                清除
                <Caret $ml={2} />
              </SmallRow>
            </SmallColumn>
            <LargeButton $w={14}>
              <LargeIcon />
              <LargeText>排</LargeText>
            </LargeButton>
          </GroupBody>
          <EdgeLabel>编</EdgeLabel>
        </Group>
      </Ribbon>

      <FormulaBar>
        <NameBox>
          B3
          <Caret />
        </NameBox>
        <Grip>
          <span />
          <span />
          <span />
        </Grip>
        <FormulaTools>
          <FormulaTool $w={44}>
            <Ico w={14} h={14}><path d="M1 1L13 13M13 1L1 13" stroke="#bbb" strokeWidth="2" /></Ico>
          </FormulaTool>
          <FormulaTool $w={46}>
            <Ico w={17} h={14}><path d="M1 7L6 12L16 1" stroke="#bbb" strokeWidth="2.4" fill="none" /></Ico>
          </FormulaTool>
          <FormulaTool $w={44}>
            <FxText>fx</FxText>
          </FormulaTool>
        </FormulaTools>
        <FormulaInput>1</FormulaInput>
      </FormulaBar>

      <Sheet>
        <CornerCell />
        {COLUMNS.map((name, i) => (
          <ColHead key={name} $col={i + 2} $on={i >= 1 && i <= 5}>
            {name}
          </ColHead>
        ))}
        <SheetCells />
        <Selection />
      </Sheet>

      <Menu>
        <MenuBig>
          <MenuBigIcon><HighlightIcon /></MenuBigIcon>
          <MenuBigText>突出显示单元格规则(<u>H</u>)</MenuBigText>
          <ChevronRight />
        </MenuBig>
        <MenuBig>
          <MenuBigIcon><TopTenIcon /></MenuBigIcon>
          <MenuBigText>最前/最后规则(<u>T</u>)</MenuBigText>
          <ChevronRight />
        </MenuBig>
        <MenuRule />
        <MenuBig>
          <MenuBigIcon><RuleBarsIcon /></MenuBigIcon>
          <MenuBigText>数据条(<u>D</u>)</MenuBigText>
          <ChevronRight />
        </MenuBig>
        <MenuBig>
          <MenuBigIcon><ScaleIcon /></MenuBigIcon>
          <MenuBigText>色阶(<u>S</u>)</MenuBigText>
          <ChevronRight />
        </MenuBig>
        <MenuBig $on>
          <MenuBigIcon><IconSetIcon /></MenuBigIcon>
          <MenuBigText $on>图标集(<u>I</u>)</MenuBigText>
          <ChevronRight />
        </MenuBig>
        <MenuSmall $mt={2}>
          <MenuSmallIcon><SmallTable /></MenuSmallIcon>
          <MenuSmallText>新建规则(<u>N</u>)...</MenuSmallText>
        </MenuSmall>
        <MenuSmall>
          <MenuSmallIcon><SmallTable eraser /></MenuSmallIcon>
          <MenuSmallText>清除规则(<u>C</u>)</MenuSmallText>
          <ChevronRight />
        </MenuSmall>
        <MenuSmall>
          <MenuSmallIcon><SmallTable frame /></MenuSmallIcon>
          <MenuSmallText>管理规则(<u>R</u>)...</MenuSmallText>
        </MenuSmall>
      </Menu>

      <SubMenu>
        {SECTIONS.map((section) => (
          <div key={section.title}>
            <SetHeader>{section.title}</SetHeader>
            {section.rows.map(([left, right], i) => (
              <SetRow key={i}>
                <SetGroup>
                  {left.map((name, j) => (
                    <SetIcon key={j} name={name} />
                  ))}
                </SetGroup>
                {right.map((name, j) => (
                  <SetIcon key={j} name={name} />
                ))}
              </SetRow>
            ))}
          </div>
        ))}
        <MoreRules>其他规则(<u>M</u>)...</MoreRules>
      </SubMenu>

      <RedFrame $x={917} $y={401} $w={233} $h={44} />
      <RedFrame $x={1195} $y={839} $w={227} $h={57} />

      <WatermarkPaw width="66" height="60" viewBox="0 0 66 60">
        <g fill="rgba(255,255,255,0.7)" stroke="rgba(120,120,120,0.4)">
          <ellipse cx="9" cy="36" rx="7" ry="11" />
          <ellipse cx="24" cy="18" rx="9" ry="16" />
          <ellipse cx="47" cy="15" rx="9" ry="14" />
          <ellipse cx="59" cy="36" rx="6" ry="10" />
        </g>
      </WatermarkPaw>
      <WatermarkBig>Baidu</WatermarkBig>
      <WatermarkCn>经验</WatermarkCn>
      <WatermarkUrl>jingyan.baidu.com</WatermarkUrl>
    </Page>
  );
}
